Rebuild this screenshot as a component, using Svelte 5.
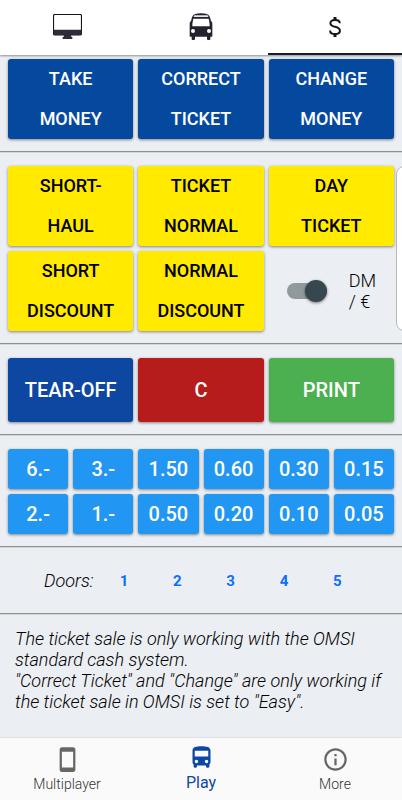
<script>
    const actions = [
        ['Take', 'Money'],
        ['Correct', 'Ticket'],
        ['Change', 'Money'],
    ];
    const tickets = [
        ['Short-', 'Haul'],
        ['Ticket', 'Normal'],
        ['Day', 'Ticket'],
        ['Short', 'Discount'],
        ['Normal', 'Discount'],
    ];
    const coins = ['6.-', '3.-', '1.50', '0.60', '0.30', '0.15', '2.-', '1.-', '0.50', '0.20', '0.10', '0.05'];
    const doors = [1, 2, 3, 4, 5];

    let tab = $state('cash');
    let euro = $state(true);
</script>

<div class="app">
    <header class="tabs">
        <button class="tab" class:active={tab === 'display'} aria-label="Display" onclick={() => (tab = 'display')}>
            <svg width="29" height="25" viewBox="0 0 87 75">
                <rect x="1.5" y="1.5" width="84" height="61" rx="4" fill="#fff" stroke="#15151c" stroke-width="3.5" />
                <path d="M2 47h83v12q0 4-4 4H6q-4 0-4-4z" fill="#2d2d38" />
                <path d="M33 62h21l1 7h3v6H29v-6h3z" fill="#2d2d38" />
            </svg>
        </button>
        <button class="tab" class:active={tab === 'bus'} aria-label="Bus" onclick={() => (tab = 'bus')}>
            <svg width="24" height="27" viewBox="-2 0 72 81">
                <path
                    d="M34 1C20 1 12 4 9 9 6 14 5 21 4 25 1 26 0 29 0 34v35q0 2 2 2h4v7q0 3 3 3h4q3 0 3-3v-7h36v7q0 3 3 3h4q3 0 3-3v-7h4q2 0 2-2V34c0-5-1-8-4-9-1-4-2-11-5-16C56 4 48 1 34 1z"
                    fill="#22222c"
                />
                <path d="M15 7h38q3 0 3 5H12q0-5 3-5z" fill="#e8e8ee" />
                <path d="M11 17h46q3 11 3 23H8q0-12 3-23z" fill="#fff" />
                <circle cx="10" cy="54" r="6" fill="#fff" />
                <circle cx="58" cy="54" r="6" fill="#fff" />
            </svg>
        </button>
        <button class="tab" class:active={tab === 'cash'} aria-label="Cash" onclick={() => (tab = 'cash')}>
            <svg width="12" height="20" viewBox="0 0 12 20" fill="none" stroke="#15151c" stroke-width="2">
                <path d="M10.8 6.2C10.8 4 9.2 2.9 6.1 2.9S1.4 4.2 1.4 6.2c0 2.4 2 3 4.6 3.6s4.9 1.4 4.9 4c0 2.1-1.8 3.3-4.8 3.3s-5-1.2-5-3.6" />
                <path d="M6 0v3M6 17v3" stroke-width="3" />
            </svg>
        </button>
    </header>

    <main>
        <div class="grid">
            {#each actions as [first, second]}
                <button class="btn navy">{first}<br />{second}</button>
            {/each}
        </div>
        <hr />
        <div class="ticket-area">
            <div class="grid">
                {#each tickets as [first, second]}
                    <button class="btn yellow">{first}<br />{second}</button>
                {/each}
                <label class="currency">
                    <input type="checkbox" bind:checked={euro} />
                    <span>DM<br />/ €</span>
                </label>
            </div>
            <div class="next-panel"></div>
        </div>
        <hr />
        <div class="grid">
            <button class="btn large blue">Tear-off</button>
            <button class="btn large red">C</button>
            <button class="btn large green">Print</button>
        </div>
        <hr />
        <div class="grid coins">
            {#each coins as coin}
                <button class="btn coin">{coin}</button>
            {/each}
        </div>
        <hr />
        <div class="doors">
            <span>Doors:</span>
            {#each doors as door}
                <button>{door}</button>
            {/each}
        </div>
        <hr />
        <p>
            The ticket sale is only working with the OMSI standard cash system.<br />
            "Correct Ticket" and "Change" are only working if the ticket sale in OMSI is set to "Easy".
        </p>
    </main>

    <nav>
        <a href="#multiplayer">
            <svg width="27" height="27" viewBox="0 0 24 24">
                <path
                    d="M17 1.01L7 1c-1.1 0-1.99.9-1.99 2v18c0 1.1.89 2 1.99 2h10c1.1 0 2-.9 2-2V3c0-1.1-.9-1.99-2-1.99zM17 19H7V5h10v14z"
                />
            </svg>
            <span>Multiplayer</span>
        </a>
        <a href="#play" class="current">
            <svg width="27" height="27" viewBox="0 0 24 24">
                <path
                    d="M4 16c0 .88.39 1.67 1 2.22V20c0 .55.45 1 1 1h1c.55 0 1-.45 1-1v-1h8v1c0 .55.45 1 1 1h1c.55 0 1-.45 1-1v-1.78c.61-.55 1-1.34 1-2.22V6c0-3.5-3.58-4-8-4s-8 .5-8 4v10zm3.5 1c-.83 0-1.5-.67-1.5-1.5S6.67 14 7.5 14s1.5.67 1.5 1.5S8.33 17 7.5 17zm9 0c-.83 0-1.5-.67-1.5-1.5s.67-1.5 1.5-1.5 1.5.67 1.5 1.5-.67 1.5-1.5 1.5zm1.5-6H6V6h12v5z"
                />
            </svg>
            <span>Play</span>
        </a>
        <a href="#more">
            <svg width="27" height="27" viewBox="0 0 24 24">
                <path
                    d="M11 7h2v2h-2zm0 4h2v6h-2zm1-9C6.48 2 2 6.48 2 12s4.48 10 10 10 10-4.48 10-10S17.52 2 12 2zm0 18c-4.41 0-8-3.59-8-8s3.59-8 8-8 8 3.59 8 8-3.59 8-8 8z"
                />
            </svg>
            <span>More</span>
        </a>
    </nav>
</div>

<style>
    :global(body) {
        margin: 0;
        background: #ebeef2;
    }
    .app {
        display: flex;
        flex-direction: column;
        min-height: 100vh;
        font-family: Roboto, sans-serif;
        font-size: 18px;
        font-weight: 300;
        line-height: 21px;
        color: #000;
    }
    button {
        font-family: inherit;
        border: none;
        padding: 0;
        cursor: pointer;
    }

    .tabs {
        display: grid;
        grid-template-columns: repeat(3, 1fr);
        height: 55px;
        background: #fff;
        box-shadow: 0 1px 2px rgba(0, 0, 0, 0.4);
    }
    .tab {
        display: flex;
        align-items: center;
        justify-content: center;
        background: none;
        border-bottom: 2px solid transparent;
    }
    .tab.active { border-bottom-color: #162026; }

    main {
        flex: 1;
        padding-top: 4px;
    }
    hr {
        height: 0;
        margin: 12px 0 13px;
        border: none;
        border-top: 1px solid #909090;
        border-bottom: 1px solid #d4d6d8;
    }

    .grid {
        display: grid;
        grid-template-columns: repeat(3, 1fr);
        gap: 5px;
        padding: 0 8px;
    }
    .grid.coins { grid-template-columns: repeat(6, 1fr); }

    .btn {
        border-radius: 3px;
        box-shadow: 0 1px 3px rgba(0, 0, 0, 0.45);
        color: #fff;
        font-size: 18px;
        font-weight: 500;
        line-height: 40px;
        text-transform: uppercase;
    }
    .btn.large {
        font-size: 20px;
        line-height: 64px;
    }
    .btn.coin {
        font-size: 20px;
        background: #2196f3;
    }
    .navy { background: #05499f; }
    .yellow { background: #ffea00; color: #000; }
    .blue { background: #0d47a1; }
    .red { background: #b71c1c; }
    .green { background: #4caf50; }

    .ticket-area {
        position: relative;
        overflow-x: clip;
    }
    /* edge of the neighbouring panel, peeking in from the right */
    .next-panel {
        position: absolute;
        top: 0;
        right: -12px;
        width: 18px;
        height: 100%;
        box-sizing: border-box;
        border: 1px solid #b4b8bc;
        border-radius: 8px;
        background: #fff;
    }

    .currency {
        display: flex;
        align-items: center;
        gap: 22px;
        padding-left: 18px;
    }
    .currency input {
        appearance: none;
        position: relative;
        width: 40px;
        height: 16px;
        margin: 0;
        border-radius: 8px;
        background: #91999f;
    }
    .currency input::before {
        content: '';
        position: absolute;
        top: -3px;
        left: 0;
        width: 22px;
        height: 22px;
        border-radius: 50%;
        background: #37474f;
        box-shadow: 0 1px 3px rgba(0, 0, 0, 0.5);
    }
    .currency input:checked::before { left: 18px; }

    .doors {
        display: grid;
        grid-template-columns: repeat(6, 1fr);
        align-items: center;
        padding: 0 38px 0 44px;
        line-height: 40px;
        font-style: italic;
    }
    .doors button {
        background: none;
        color: #0d6efd;
        font-size: 15px;
        font-weight: 700;
        line-height: 40px;
    }

    p {
        margin: 0;
        padding: 0 12px 13px 15px;
        font-style: italic;
    }

    nav {
        display: grid;
        grid-template-columns: repeat(3, 1fr);
        height: 62px;
        background: #fafafa;
        box-shadow: 0 0 2px rgba(0, 0, 0, 0.15);
    }
    nav a {
        display: flex;
        flex-direction: column;
        align-items: center;
        justify-content: flex-end;
        gap: 2px;
        padding-bottom: 7px;
        color: #666;
        font-size: 14px;
        line-height: 18px;
        text-decoration: none;
    }
    nav a span { color: #333; }
    nav a.current,
    nav a.current span {
        color: #0d47a1;
        font-size: 16px;
        font-weight: 400;
        line-height: 20px;
    }
    nav svg { fill: currentColor; }
</style>
